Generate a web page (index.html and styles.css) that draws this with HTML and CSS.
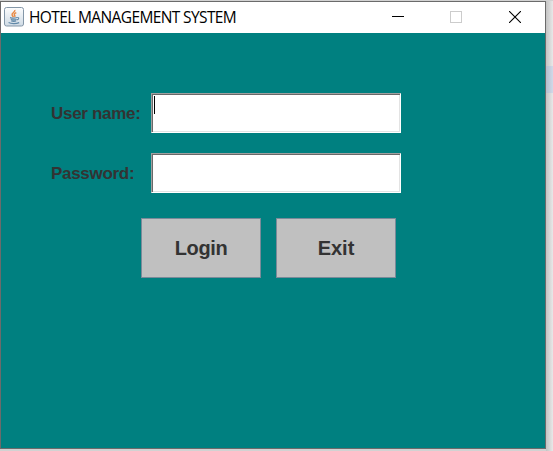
FILE: index.html
```html
<!DOCTYPE html>
<html lang="en">
<head>
<meta charset="utf-8">
<title>HOTEL MANAGEMENT SYSTEM</title>
<link rel="stylesheet" href="styles.css">
</head>
<body>
<main class="window">
  <header class="titlebar">
    <svg class="app-icon" width="20" height="20" viewBox="0 0 20 20">
      <defs><linearGradient id="tile" x1="0" y1="0" x2="0" y2="1"><stop offset="0" stop-color="#fdfdfd"/><stop offset="1" stop-color="#cfdbe5"/></linearGradient></defs>
      <rect x=".5" y=".5" width="19" height="18.5" rx="2" fill="url(#tile)" stroke="#8497a8"/>
      <path d="M10.800 3c.8 2-3.600 3-2.700 5.100.3.8 1 1.200 1.300 1.900M12.300 5.600c-1.800.9-2.600 1.600-1.600 2.900.4.6.3 1.100-.2 1.500" fill="none" stroke="#e88a45" stroke-width="1.500"/>
      <path d="M6 10.600c2 .6 5.300.6 7 0M6.800 12.400c1.800.6 4.200.6 5.700 0M7.200 14c1.600.5 3.600.5 5 0M13.200 10.500c2.200-.4 2 1.900-.4 2.400" fill="none" stroke="#6289a8" stroke-width="1.100"/>
      <path d="M4.600 15.600c2.500 1.400 7.800 1.300 10.600 0" fill="none" stroke="#6289a8" stroke-width="1.200"/>
    </svg>
    <h1 class="title">HOTEL MANAGEMENT SYSTEM</h1>
    <div class="controls">
      <svg width="12" height="12" viewBox="0 0 12 12" shape-rendering="crispEdges"><path d="M0 5.500H12" stroke="#000"/></svg>
      <svg width="12" height="12" viewBox="0 0 12 12" shape-rendering="crispEdges"><rect x=".5" y=".5" width="11" height="11" fill="none" stroke="#ccc"/></svg>
      <svg class="close" width="12" height="12" viewBox="0 0 12 12"><path d="M0 0L12 12M12 0L0 12" stroke="#000" stroke-width="1.100"/></svg>
    </div>
  </header>
  <form class="content">
    <div class="row"><label class="label">User name:</label><div class="field"><span class="caret"></span></div></div>
    <div class="row"><label class="label">Password:</label><div class="field"></div></div>
    <div class="actions"><button class="button login" type="button">Login</button><button class="button" type="button">Exit</button></div>
  </form>
</main>
<aside class="backdrop"><div class="strip"></div></aside>
</body>
</html>
```
FILE: styles.css
```css
* { box-sizing: border-box; }
body {
  margin: 0;
  width: 553px;
  height: 451px;
  padding-top: 1px;
  display: flex;
  align-items: flex-start;
  overflow: hidden;
  background: #d2d2d2;
  font-family: "Liberation Sans", Arial, sans-serif;
}
.window {
  width: 546px;
  height: 448px;
  border: 1px solid #6b6b6b;
  background: #008080;
}
.titlebar {
  display: flex;
  align-items: center;
  height: 31px;
  padding: 0 24px 0 3px;
  background: #fff;
}
.app-icon { flex: none; margin-top: -1px; }
.title {
  margin: -2px 0 0 5px;
  font: 400 15.5px/20px "Open Sans", "Noto Sans", sans-serif;
  letter-spacing: -0.62px;
  white-space: nowrap;
  color: #000;
}
.controls {
  display: flex;
  gap: 46px;
  margin: -1px 0 0 auto;
}
.controls svg { display: block; }
.controls .close { margin-left: 1px; }
.content { padding: 60px 0 0 50px; }
.row {
  display: flex;
  align-items: center;
  height: 40px;
  margin-bottom: 20px;
}
.label {
  width: 100px;
  padding-top: 2px;
  font-size: 17px;
  font-weight: 700;
  letter-spacing: -0.3px;
  color: #333;
  white-space: nowrap;
}
.field {
  width: 250px;
  height: 40px;
  padding: 1px;
  background: #fff;
  border: 1px solid;
  border-color: #a0a0a0 #fff #fff #a0a0a0;
  box-shadow: inset 1px 1px #696969, inset -1px -1px #e3e3e3;
}
.caret {
  display: block;
  width: 1px;
  height: 18px;
  margin: 1px 0 0 1px;
  background: #000;
}
.actions {
  display: flex;
  gap: 15px;
  padding: 5px 0 0 90px;
}
.button {
  width: 120px;
  height: 60px;
  padding: 0;
  border: 1px solid #7a8a99;
  border-radius: 0;
  background: #c0c0c0;
  color: #333;
  font: 700 20px/24px "Liberation Sans", Arial, sans-serif;
}
.login { letter-spacing: -0.4px; }
.backdrop {
  flex: 1;
  height: 450px;
  padding-top: 65px;
  background: linear-gradient(90deg, #c4c4c4, #e8e8e8);
}
.strip {
  height: 27px;
  background: linear-gradient(90deg, #b5becd, #d0d9e9);
}
```
